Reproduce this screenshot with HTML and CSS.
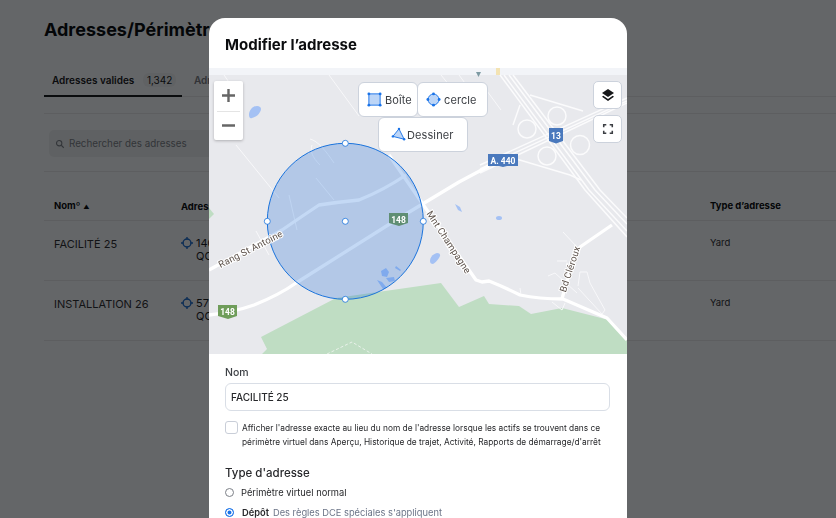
FILE: index.html
```html
<!DOCTYPE html>
<html lang="fr">
<head>
    <meta charset="UTF-8">
    <meta name="viewport" content="width=device-width, initial-scale=1.0">
    <title>Adresses/Périmètres</title>
    <link rel="stylesheet" href="styles.css">
</head>
<body>
    <!-- Page behind the dialog -->
    <div class="page">
        <h1 class="page-title">Adresses/Périmètres</h1>
        <div class="tabs">
            <div class="tab tab-active">Adresses valides <span class="tab-count">1,342</span></div>
            <div class="tab tab-muted">Adresses</div>
        </div>
        <div class="search-row">
            <div class="search-box">
                <svg class="search-icon" viewBox="0 0 12 12"><circle cx="5" cy="5" r="3.2"/><path d="M7.5 7.5 10.5 10.5"/></svg>
                Rechercher des adresses
            </div>
        </div>
        <div class="table">
            <div class="table-row table-head">
                <div class="col-name">Nomº<span class="sort-mark">▲</span></div>
                <div class="col-address">Adresse</div>
                <div class="col-type">Type d’adresse</div>
            </div>
            <div class="table-row">
                <div class="col-name">FACILITÉ 25</div>
                <div class="col-address">
                    <svg class="geo-icon" viewBox="0 0 14 14"><circle cx="7" cy="7" r="4.6"/><path d="M7 0v3M7 11v3M0 7h3M11 7h3"/></svg>
                    <span>1405<br>QC</span>
                </div>
                <div class="col-type">Yard</div>
            </div>
            <div class="table-row">
                <div class="col-name">INSTALLATION 26</div>
                <div class="col-address">
                    <svg class="geo-icon" viewBox="0 0 14 14"><circle cx="7" cy="7" r="4.6"/><path d="M7 0v3M7 11v3M0 7h3M11 7h3"/></svg>
                    <span>5750<br>QC</span>
                </div>
                <div class="col-type">Yard</div>
            </div>
        </div>
    </div>

    <div class="overlay">
        <div class="modal">
            <div class="modal-head">Modifier l’adresse</div>

            <div class="map">
                <svg class="map-art" viewBox="0 -7 418 286">
                    <rect x="0" y="-7" width="418" height="286" fill="#e8e9ed"/>
                    <rect x="0" y="-7" width="418" height="7" fill="#f2f4f8"/>
                    <path d="M267 -3h5l-2.500 5z" fill="#7e9aa3"/>
                    <rect x="287" y="-7" width="4" height="7" fill="#f3e3b3"/>

                    <!-- park -->
                    <path class="park" d="M52 262 127 223 232 208 250 232 275 221 280 229 310 231 322 239 353 233 400 245 418 265V279H53L58 274Z"/>
                    <path class="park" d="M0 133 5 139 0 144Z"/>
                    <path class="trail" d="M118 279 143 267 163 279"/>

                    <!-- minor streets -->
                    <g class="street">
                        <path d="M15 0 24 13"/>
                        <path d="M27 70 70 123"/>
                        <path d="M101 64c8 2 16 12 24 24M103 70c-2 6 0 12 8 20"/>
                        <path d="M120 0 150 41"/>
                        <path d="M232 0 262 37"/>
                        <path d="M250 0 275 34"/>
                        <path d="M278 16 292 35"/>
                        <path d="M107 103 125 125M80 120 88 155M47 156 60 180"/>
                        <path d="M354 157 368 172M348 186 358 186"/>
                        <path d="M339 201 346 198 368 218M343 227 353 235 356 228"/>
                        <path d="M369 211 371 197 378 197 381 208 396 235 393 239 369 213"/>
                        <path d="M311 213 312 220"/>
                    </g>

                    <!-- highway lanes and interchange -->
                    <g class="highway">
                        <path d="M291 0 376 115 418 162"/>
                        <path d="M295 0 380 115 418 156"/>
                        <path d="M300 0 386 115 418 149"/>
                        <path d="M304 0 391 115 418 143"/>
                        <circle cx="348" cy="41" r="9"/>
                        <circle cx="318" cy="54" r="9"/>
                        <circle cx="371" cy="70" r="9.500"/>
                        <circle cx="338" cy="81" r="9"/>
                        <path d="M271 90 418 23"/>
                        <path d="M271 94 418 26"/>
                        <path d="M271 98 418 28"/>
                        <path d="M321 20 374 36M311 30 304 50"/>
                        <path d="M304 83 361 100 372 105"/>
                    </g>

                    <!-- main roads -->
                    <g class="road">
                        <path d="M0 195 Q40 173 73 155 Q95 140 110 130 Q130 127 150 125 Q175 115 197 100"/>
                        <path d="M0 240 Q25 237 45 230 Q70 220 87 208 L187 145 L250 107 L280 91"/>
                        <path d="M180 80 213 128 267 205 273 207 280 206 Q295 212 311 220 Q330 224 354 224 L398 243 418 265"/>
                        <path d="M403 150 371 172 Q360 195 353 224"/>
                    </g>

                    <!-- water -->
                    <g class="water">
                        <path d="M40 40c0-5 4-9 8-9 4 0 5 3 3 6-2 4-5 5-8 6-2 1-3-1-3-3z"/>
                        <path d="M221 186c0-4 3-7 7-8 3 0 4 2 2 5-2 3-4 5-6 6-2 0-3-1-3-3z"/>
                        <path d="M246 129l5 3 2 5-4-2z"/>
                        <ellipse cx="290" cy="143" rx="3" ry="2"/>
                        <path d="M172 196l5-3 3 4-2 5-5-1zM177 203l8-1 1 4-6 1zM168 205l5 2 5 6-4 1zM187 191l5 4-1 1-5-3z"/>
                    </g>

                    <!-- circle being edited -->
                    <circle class="fence" cx="136.300" cy="146.300" r="78"/>
                    <circle class="handle" cx="136.300" cy="68.300" r="3"/>
                    <circle class="handle" cx="136.300" cy="146.300" r="3"/>
                    <circle class="handle" cx="136.300" cy="224.300" r="3"/>
                    <circle class="handle" cx="58.300" cy="146.300" r="3"/>
                    <circle class="handle" cx="214.300" cy="146.300" r="3"/>

                    <!-- labels -->
                    <text class="map-label" transform="translate(43 177) rotate(-27)" text-anchor="middle">Rang St Antoine</text>
                    <text class="map-label" transform="translate(237 169) rotate(57)" text-anchor="middle">Mnt Champagne</text>
                    <text class="map-label" transform="translate(364 195) rotate(-72)" text-anchor="middle">Bd Cléroux</text>

                    <!-- route shields -->
                    <path d="M340 53h14v13l-7 2.500-7-2.500z" fill="#4a79bd"/>
                    <text class="shield-text" x="347" y="63.500" text-anchor="middle">13</text>
                    <path d="M279 79h30v12h-11l-4 1-4-1h-11z" fill="#4a79bd"/>
                    <text class="shield-text" x="294" y="88.500" text-anchor="middle">A. 440</text>
                    <path d="M180 138h19v10l-9 3-10-3z" fill="#5f8e73"/>
                    <text class="shield-text" x="189.500" y="147.500" text-anchor="middle">148</text>
                    <path d="M9 230h19v11l-9 3-10-3z" fill="#6f9d5a"/>
                    <text class="shield-text" x="18.500" y="240" text-anchor="middle">148</text>
                </svg>

                <div class="zoom-control">
                    <div class="zoom-btn">
                        <svg viewBox="0 0 14 14"><path d="M7 0v14M0 7h14"/></svg>
                    </div>
                    <div class="zoom-btn">
                        <svg viewBox="0 0 14 14"><path d="M0 7h14"/></svg>
                    </div>
                </div>

                <div class="draw-tools">
                    <div class="draw-btn draw-btn-box">
                        <svg class="draw-icon" viewBox="0 0 16 16">
                            <rect class="shape" x="2" y="2" width="12" height="12"/>
                            <circle cx="2" cy="2" r="1.500"/><circle cx="14" cy="2" r="1.500"/>
                            <circle cx="2" cy="14" r="1.500"/><circle cx="14" cy="14" r="1.500"/>
                        </svg>
                        Boîte
                    </div>
                    <div class="draw-btn draw-btn-circle">
                        <svg class="draw-icon" viewBox="0 0 16 16">
                            <circle class="shape" cx="8" cy="8" r="5.800"/>
                            <circle cx="8" cy="2" r="1.500"/><circle cx="8" cy="14" r="1.500"/>
                            <circle cx="2" cy="8" r="1.500"/><circle cx="14" cy="8" r="1.500"/>
                        </svg>
                        cercle
                    </div>
                    <div class="draw-btn draw-btn-poly">
                        <svg class="draw-icon" viewBox="0 0 16 16">
                            <path class="shape" d="M8.500 2 14 13 2 10Z"/>
                            <circle cx="8.500" cy="2" r="1.300"/><circle cx="14" cy="13" r="1.300"/>
                            <circle cx="2" cy="10" r="1.300"/>
                        </svg>
                        Dessiner
                    </div>
                </div>

                <div class="map-actions">
                    <div class="map-btn">
                        <svg viewBox="0 0 14 14" class="layers-icon">
                            <path d="M7 1 13 5 7 9 1 5Z"/>
                            <path d="M2.300 7.800 1 8.800 7 13 13 8.800 11.700 7.800 7 11Z"/>
                        </svg>
                    </div>
                    <div class="map-btn">
                        <svg viewBox="0 0 14 14" class="full-icon"><path d="M2 5V2H5M9 2H12V5M12 9V12H9M5 12H2V9"/></svg>
                    </div>
                </div>
            </div>

            <div class="modal-body">
                <div class="field-label">Nom</div>
                <div class="text-input">FACILITÉ 25</div>
                <div class="check-row">
                    <span class="checkbox"></span>
                    <p>Afficher l'adresse exacte au lieu du nom de l'adresse lorsque les actifs se trouvent dans ce périmètre virtuel dans Aperçu, Historique de trajet, Activité, Rapports de démarrage/d'arrêt</p>
                </div>
                <div class="section-label">Type d'adresse</div>
                <div class="radio-row"><span class="radio"></span>Périmètre virtuel normal</div>
                <div class="radio-row radio-row-on"><span class="radio radio-on"></span><b>Dépôt</b><span class="hint">Des règles DCE spéciales s'appliquent</span></div>
            </div>
        </div>
    </div>
</body>
</html>
```

FILE: styles.css
```css
/* Global Reset */
* {
    margin: 0;
    padding: 0;
    box-sizing: border-box;
}

html, body {
    height: 100%;
    overflow: hidden;
}

body {
    font-family: 'Inter', 'Liberation Sans', sans-serif;
    background: #fbfcff;
    color: #1b1c1e;
}

/* Page behind the dialog */
.page {
    padding: 19px 0 0 44px;
}

.page-title {
    font-size: 18px;
    font-weight: 700;
    line-height: 22px;
    white-space: nowrap;
    color: #0c0d0f;
}

.tabs {
    display: flex;
    gap: 12px;
    margin-top: 16px;
    height: 40px;
    border-bottom: 1px solid #e8e9ec;
    font-size: 10px;
}

.tab {
    padding: 17px 8px 0;
    height: 40px;
    width: 138px;
    white-space: nowrap;
    font-weight: 600;
}

.tab-active {
    border-bottom: 2px solid #1b1c1e;
}

.tab-count {
    font-weight: 400;
    margin-left: 6px;
    padding: 1px 4px;
    background: #f1f3f4;
    border-radius: 6px;
}

.tab-muted {
    color: #7b7e84;
    padding-left: 0;
}

.search-row {
    margin-top: 16px;
    height: 59px;
    padding: 16px 0 0 5px;
    border-top: 1px solid #e8e9ec;
    border-bottom: 1px solid #e8e9ec;
}

.search-box {
    display: flex;
    align-items: center;
    gap: 4px;
    width: 300px;
    height: 27px;
    padding-left: 6px;
    background: #eef1f2;
    border-radius: 5px;
    font-size: 9.800px;
    color: #7f838a;
}

.search-icon {
    width: 10px;
    height: 10px;
    fill: none;
    stroke: #7f838a;
    stroke-width: 1.300;
}

.table-row {
    display: flex;
    height: 60px;
    border-bottom: 1px solid #e8e9ec;
    font-size: 11px;
    padding-top: 16px;
}

.table-head {
    height: 49px;
    padding-top: 28px;
    font-size: 9.500px;
    font-weight: 700;
    color: #0c0d0f;
}

.col-name {
    width: 137px;
    padding-left: 10px;
}

.table-row:not(.table-head) .col-name {
    color: #303134;
}

.sort-mark {
    font-size: 6px;
    margin-left: 3px;
}

.col-address {
    display: flex;
    gap: 3px;
    width: 529px;
    line-height: 13px;
}

.col-type {
    white-space: nowrap;
}

.table-row:not(.table-head) .col-type {
    font-size: 9.500px;
    color: #303134;
}

.geo-icon {
    width: 12px;
    height: 12px;
    fill: none;
    stroke: #1f6fd0;
    stroke-width: 1.600;
}

/* Dialog */
.overlay {
    position: fixed;
    top: 0;
    right: 0;
    bottom: 0;
    left: 0;
    display: flex;
    justify-content: center;
    align-items: flex-start;
    padding-top: 18px;
    background: rgba(0, 2, 4, 0.6);
}

.modal {
    width: 418px;
    min-height: 600px; /* runs past the bottom of the window */
    background: white;
    border-radius: 16px;
    overflow: hidden;
    flex-shrink: 0;
}

.modal-head {
    height: 50px;
    padding: 17px 16px 0;
    font-size: 15px;
    line-height: 20px;
    font-weight: 700;
    color: #0c0d0f;
}

/* Map */
.map {
    position: relative;
    height: 286px;
}

.map-art {
    display: block;
    width: 418px;
    height: 286px;
}

.park {
    fill: #bfddc3;
}

.trail {
    fill: none;
    stroke: #f3f6f2;
    stroke-width: 0.800;
    stroke-dasharray: 3 2;
}

.street {
    fill: none;
    stroke: #f8f8fa;
    stroke-width: 1;
}

.highway {
    fill: none;
    stroke: #fbfbfc;
    stroke-width: 1.500;
}

.road {
    fill: none;
    stroke: white;
    stroke-width: 3.300;
    stroke-linejoin: round;
}

.water {
    fill: #a4c1f4;
}

.fence {
    fill: #1266d6;
    fill-opacity: 0.25;
    stroke: #1a73dc;
    stroke-width: 1;
}

.handle {
    fill: white;
    stroke: #1a73dc;
    stroke-width: 0.800;
}

.map-label {
    font-family: 'Roboto', sans-serif;
    font-size: 9.500px;
    letter-spacing: 0.2px;
    fill: #5a4f48;
    stroke: white;
    stroke-width: 2;
    paint-order: stroke;
}

.shield-text {
    font-family: 'Roboto', sans-serif;
    font-size: 8.500px;
    font-weight: 700;
    fill: white;
}

.zoom-control {
    position: absolute;
    top: 13px;
    left: 5px;
    width: 29px;
    padding: 0 3px;
    background: white;
    border-radius: 2px;
    box-shadow: 0 1px 3px rgba(0, 0, 0, 0.25);
}

.zoom-btn {
    display: flex;
    justify-content: center;
    align-items: center;
    height: 29.500px;
}

.zoom-btn + .zoom-btn {
    border-top: 1px solid #e4e4e4;
}

.zoom-btn svg {
    width: 13px;
    height: 13px;
    fill: none;
    stroke: #666;
    stroke-width: 2.600;
}

.draw-tools {
    position: absolute;
    top: 14px;
    left: 134px;
    width: 160px;
    display: flex;
    flex-wrap: wrap;
    justify-content: center;
}

.draw-btn {
    display: flex;
    align-items: center;
    gap: 3px;
    height: 35px;
    background: white;
    border: 1px solid #ccd2dc;
    border-radius: 6px;
    font-size: 11px;
    letter-spacing: 0.1px;
    color: #3c3f44;
    white-space: nowrap;
}

.draw-btn-box {
    width: 60px;
    padding-left: 8px;
}

.draw-btn-circle {
    width: 71px;
    margin-left: -1px;
    padding-left: 8px;
}

.draw-btn-poly {
    width: 90px;
    gap: 1px;
    padding-left: 12px;
}

.draw-icon {
    width: 15px;
    height: 15px;
    flex-shrink: 0;
    fill: #1a73e8;
}

.draw-icon .shape {
    fill: #bcd5f7;
    stroke: #1a73e8;
    stroke-width: 1;
}

.map-actions {
    position: absolute;
    top: 13px;
    right: 5px;
    display: flex;
    flex-direction: column;
    gap: 6px;
}

.map-btn {
    display: flex;
    align-items: center;
    justify-content: center;
    width: 29px;
    height: 28px;
    background: white;
    border: 1px solid #ccd2dc;
    border-radius: 5px;
}

.layers-icon {
    width: 14px;
    height: 14px;
    fill: #17181a;
}

.full-icon {
    width: 12px;
    height: 12px;
    fill: none;
    stroke: #3c3f44;
    stroke-width: 1.800;
}

/* Form */
.modal-body {
    padding: 12px 16px 0;
    font-size: 10px;
}

.field-label {
    font-size: 10.500px;
    line-height: 13px;
    font-weight: 500;
    color: #3c3f44;
}

.text-input {
    display: flex;
    align-items: center;
    width: 385px;
    height: 28px;
    margin-top: 4px;
    padding-left: 5px;
    border: 1px solid #d9dee6;
    border-radius: 6px;
    font-size: 10px;
    font-weight: 500;
    color: #27282b;
}

.check-row {
    display: flex;
    gap: 4px;
    margin-top: 10px;
}

.checkbox {
    flex-shrink: 0;
    width: 13px;
    height: 13px;
    border: 1px solid #c9ced8;
    border-radius: 3px;
}

.check-row p {
    font-size: 8.350px;
    line-height: 14px;
    color: #27282b;
}

.section-label {
    margin-top: 17px;
    font-size: 11.500px;
    line-height: 15px;
    font-weight: 500;
    color: #27282b;
}

.radio-row {
    display: flex;
    align-items: center;
    gap: 7px;
    margin-top: 3px;
    height: 17px;
    font-size: 9.300px;
    color: #27282b;
}

.radio-row-on {
    margin-top: 3px;
}

.radio-row b {
    font-weight: 600;
    margin-left: 1px;
}

.radio {
    flex-shrink: 0;
    width: 9px;
    height: 9px;
    border: 1px solid #7d8188;
    border-radius: 50%;
}

.radio-on {
    border-color: #1a73e8;
    box-shadow: inset 0 0 0 1.500px white;
    background: #1a73e8;
}

.hint {
    margin-left: -3px;
    color: #6b7487;
}
```
